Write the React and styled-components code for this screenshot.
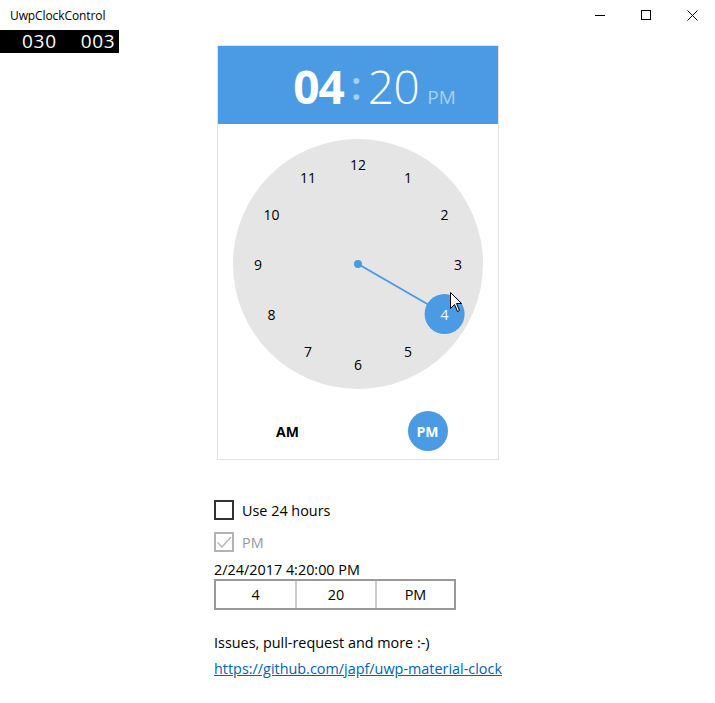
import React from "react";
import styled, { createGlobalStyle } from "styled-components";

const Global = createGlobalStyle`
  html, body { margin: 0; padding: 0; background: #fff; }
  body { font-family: "Open Sans", "Noto Sans", sans-serif; color: #000; }
  * { box-sizing: border-box; }
`;

const BLUE = "#4a9be3";

const Page = styled.div`
  position: relative;
  width: 715px;
  height: 703px;
  display: flex;
  flex-direction: column;
`;

/* Window chrome */
const TitleBar = styled.div`
  height: 30px;
  display: flex;
  align-items: center;
  justify-content: space-between;
  padding-left: 10px;
`;

const Title = styled.span`
  font-size: 12px;
  letter-spacing: -0.1px;
`;

const WinButtons = styled.div`
  display: flex;
  height: 30px;
`;

const WinButton = styled.div`
  width: 46px;
  height: 30px;
  display: flex;
  align-items: center;
  justify-content: center;
`;

const FrameCounter = styled.div`
  position: absolute;
  left: 0;
  top: 30px;
  width: 119px;
  height: 23px;
  background: #000;
  color: #fff;
  font-size: 19px;
  line-height: 23px;
  display: flex;
  gap: 24px;
  padding-left: 22px;
  letter-spacing: 0.7px;
`;

/* Main column */
const Main = styled.div`
  display: flex;
  flex-direction: column;
  align-items: center;
  padding-top: 15px;
`;

const Card = styled.div`
  width: 282px;
  border: 1px solid #e3e3e3;
  display: flex;
  flex-direction: column;
  align-items: center;
  padding-bottom: 8px;
`;

const Header = styled.div`
  width: 100%;
  height: 78px;
  background: ${BLUE};
  display: flex;
  align-items: baseline;
  justify-content: center;
  padding-top: 7px;
  padding-left: 34px;
  color: #fff;
`;

const Hour = styled.span`
  font-size: 46px;
  font-weight: 700;
  line-height: 66px;
  letter-spacing: -1px;
`;

const Colon = styled.span`
  font-size: 40px;
  font-weight: 600;
  color: #a9cff2;
  margin: 0 6px 0 7px;
  position: relative;
  top: -4px;
`;

const Minute = styled.span`
  font-size: 46px;
  font-weight: 300;
  letter-spacing: -0.5px;
`;

const Period = styled.span`
  font-size: 19px;
  color: #a9cff2;
  margin-left: 8px;
`;

const Face = styled.svg`
  display: block;
  margin-top: 15px;
  font-family: "Open Sans", "Noto Sans", sans-serif;
  overflow: visible;
`;

const PeriodRow = styled.div`
  display: flex;
  gap: 100px;
  margin-top: 22px;
`;

const PeriodChip = styled.div`
  width: 40px;
  height: 40px;
  border-radius: 50%;
  display: flex;
  align-items: center;
  justify-content: center;
  font-size: 14px;
  font-weight: 700;
  background: ${(p) => (p.$active ? BLUE : "transparent")};
  color: ${(p) => (p.$active ? "#fff" : "#000")};
`;

/* Controls below */
const Controls = styled.div`
  align-self: flex-start;
  margin-left: 214px;
  margin-top: 40px;
  display: flex;
  flex-direction: column;
  font-size: 14.4px;
`;

const CheckRow = styled.label`
  display: flex;
  align-items: center;
  gap: 8px;
  height: 20px;
  margin-bottom: 12px;
  color: ${(p) => (p.$disabled ? "#999" : "#000")};
`;

const Box = styled.span`
  width: 20px;
  height: 20px;
  border: 2px solid ${(p) => (p.$disabled ? "#b3b3b3" : "#333")};
  display: flex;
  align-items: center;
  justify-content: center;
`;

const DateLine = styled.div`
  line-height: 18px;
  margin-top: -3px;
`;

const Segments = styled.div`
  display: grid;
  grid-template-columns: 79px 80px 79px;
  width: 242px;
  height: 31px;
  border: 2px solid #999;
`;

const Segment = styled.div`
  display: flex;
  align-items: center;
  justify-content: center;
  border-left: ${(p) => (p.$first ? "none" : "2px solid #ccc")};
`;

const Note = styled.div`
  margin-top: 23px;
  line-height: 20px;
`;

const Link = styled.a`
  margin-top: 6px;
  color: #0063b1;
  text-decoration: underline;
  line-height: 20px;
`;

const numbers = [12, 1, 2, 3, 4, 5, 6, 7, 8, 9, 10, 11];

function ClockFace() {
  const c = 125;
  const r = 100;
  const sel = 4;
  const a = (sel / 12) * Math.PI * 2;
  const sx = c + r * Math.sin(a);
  const sy = c - r * Math.cos(a);
  return (
    <Face width="250" height="250" viewBox="0 0 250 250">
      <circle cx={c} cy={c} r={125} fill="#e5e5e5" />
      <line x1={c} y1={c} x2={sx} y2={sy} stroke={BLUE} strokeWidth="2" />
      <circle cx={c} cy={c} r={4} fill={BLUE} />
      <circle cx={sx} cy={sy} r={20} fill={BLUE} />
      {numbers.map((n, i) => {
        const ang = (i / 12) * Math.PI * 2;
        const x = c + r * Math.sin(ang);
        const y = c - r * Math.cos(ang);
        return (
          <text
            key={n}
            x={x}
            y={y + 6}
            textAnchor="middle"
            fontSize="14"
            fill={n === sel ? "#fff" : "#000"}
          >
            {n}
          </text>
        );
      })}
      {/* mouse cursor */}
      <path
        d="M0 0 L0 16 L4 12 L7 19 L9 18 L6 11 L11 11 Z"
        fill="#fff"
        stroke="#000"
        strokeWidth="1"
        strokeLinejoin="round"
        transform="translate(217.5 153.5)"
      />
    </Face>
  );
}

export default function App() {
  return (
    <Page>
      <Global />
      <TitleBar>
        <Title>UwpClockControl</Title>
        <WinButtons>
          <WinButton>
            <svg width="10" height="10" viewBox="0 0 10 10">
              <path d="M0 5.5 H10" stroke="#000" strokeWidth="1" />
            </svg>
          </WinButton>
          <WinButton>
            <svg width="10" height="10" viewBox="0 0 10 10">
              <rect x="0.5" y="0.5" width="9" height="9" fill="none" stroke="#000" />
            </svg>
          </WinButton>
          <WinButton>
            <svg width="11" height="11" viewBox="0 0 11 11">
              <path d="M0.5 0.5 L10.5 10.5 M10.5 0.5 L0.5 10.5" stroke="#000" />
            </svg>
          </WinButton>
        </WinButtons>
      </TitleBar>
      <FrameCounter>
        <span>030</span>
        <span>003</span>
      </FrameCounter>

      <Main>
        <Card>
          <Header>
            <Hour>04</Hour>
            <Colon>:</Colon>
            <Minute>20</Minute>
            <Period>PM</Period>
          </Header>
          <ClockFace />
          <PeriodRow>
            <PeriodChip>AM</PeriodChip>
            <PeriodChip $active>PM</PeriodChip>
          </PeriodRow>
        </Card>

        <Controls>
          <CheckRow>
            <Box />
            Use 24 hours
          </CheckRow>
          <CheckRow $disabled>
            <Box $disabled>
              <svg width="16" height="16" viewBox="0 0 16 16">
                <path d="M1.5 8.5 L6 13 L15 3" fill="none" stroke="#b3b3b3" strokeWidth="1.3" />
              </svg>
            </Box>
            PM
          </CheckRow>
          <DateLine>2/24/2017 4:20:00 PM</DateLine>
          <Segments>
            <Segment $first>4</Segment>
            <Segment>20</Segment>
            <Segment>PM</Segment>
          </Segments>
          <Note>Issues, pull-request and more :-)</Note>
          <Link href="#">https://github.com/japf/uwp-material-clock</Link>
        </Controls>
      </Main>
    </Page>
  );
}
